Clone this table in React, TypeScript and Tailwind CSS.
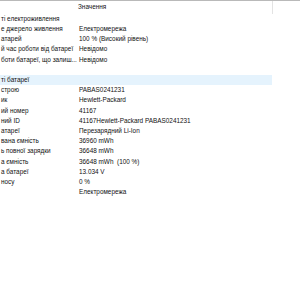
type Row = { label: string; value?: string; group?: boolean; hover?: boolean };

const rows: Row[] = [
  { label: 'ті електроживлення', group: true },
  { label: 'е джерело живлення', value: 'Електромережа' },
  { label: 'атарей', value: '100 % (Високий рівень)' },
  { label: 'й час роботи від батареї', value: 'Невідомо' },
  { label: 'боти батареї, що залиш...', value: 'Невідомо' },
  { label: '' },
  { label: 'ті батареї', group: true, hover: true },
  { label: 'строю', value: 'PABAS0241231' },
  { label: 'ик', value: 'Hewlett-Packard' },
  { label: 'ий номер', value: '41167' },
  { label: 'ний ID', value: '41167Hewlett-Packard PABAS0241231' },
  { label: 'атареї', value: 'Перезарядний Li-Ion' },
  { label: 'вана ємність', value: '36960 mWh' },
  { label: 'ь повної зарядки', value: '36648 mWh' },
  { label: 'а ємність', value: '36648 mWh  (100 %)' },
  { label: 'а батареї', value: '13.034 V' },
  { label: 'носу', value: '0 %' },
  { label: '', value: 'Електромережа' },
];

export default function App() {
  return (
    <div
      className="w-[300px] h-[300px] bg-white overflow-hidden border-t border-[#b9b9b9] text-[#111111] text-[6.4px] leading-none"
      style={{ fontFamily: '"Liberation Sans", Arial, sans-serif' }}
    >
      {/* column header */}
      <div className="flex h-[13px] w-[273px]">
        <div className="w-[78px] shrink-0" />
        <div className="flex-1 flex items-center border-r border-[#e3e3e3]">
          <span>Значення</span>
        </div>
      </div>

      {/* property list */}
      <div className="w-[272px]">
        {rows.map((row, i) => (
          <div
            key={i}
            className={`flex items-center h-[10.2px] whitespace-nowrap ${row.hover ? 'bg-[#e5f3fd]' : ''}`}
          >
            <div className="w-[79px] shrink-0 pl-[1px]">{row.label}</div>
            <div className="flex-1 whitespace-pre">{row.value}</div>
          </div>
        ))}
      </div>
    </div>
  );
}
